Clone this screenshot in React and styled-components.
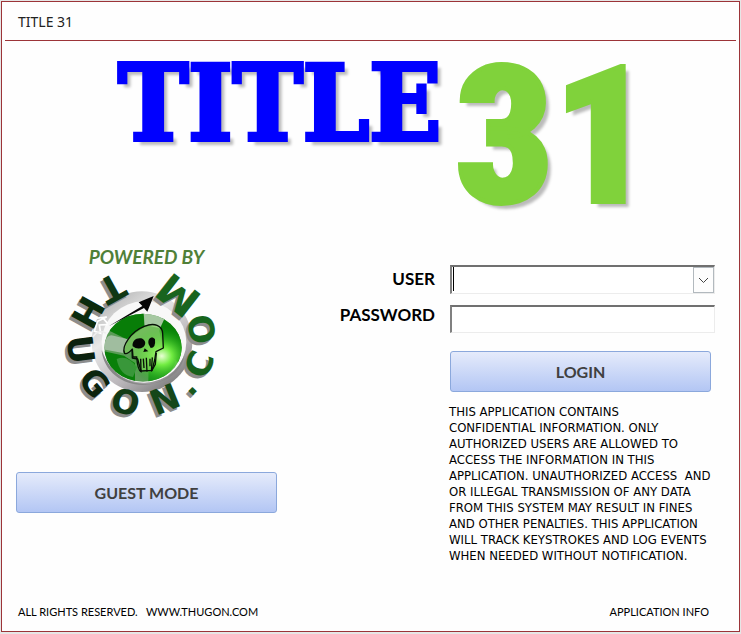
import React from "react";
import styled, { createGlobalStyle } from "styled-components";

const GlobalStyle = createGlobalStyle`
  * { box-sizing: border-box; }
  body {
    margin: 0;
    background: #e6e6e6;
    color: #000;
    font-family: Lato, "Open Sans", sans-serif;
  }
`;

const Frame = styled.div`
  display: flex;
  flex-direction: column;
  min-height: calc(100vh - 3px);
  margin: 1px 1px 2px;
  border: 1px solid #9c3438;
  background: #fefefe;
`;

const TitleBar = styled.header`
  margin: 0 3px;
  padding: 9px 13px 8px;
  border-bottom: 1px solid #9c3438;
  color: #222;
  font: 14px/21px "Noto Sans", sans-serif;
`;

const Brand = styled.h1`
  display: flex;
  align-items: flex-start;
  gap: 14px;
  height: 206px;
  margin: 0;
  padding: 23px 20px 0 116px;
`;

const BrandWord = styled.span`
  color: #0000ff;
  font: bold 105px/78px "DejaVu Serif Condensed", "DejaVu Serif", serif;
  -webkit-text-stroke: 4px #0000ff;
  text-shadow: 5px 5px 3px #bbb;
`;

const BrandNumber = styled.span`
  color: #80d23b;
  font: 900 192px/146px "Roboto Condensed", "Open Sans Condensed", Roboto, sans-serif;
  -webkit-text-stroke: 4px #80d23b;
  text-shadow: 5px 5px 3px #bbb;
`;

const Content = styled.main`
  display: grid;
  grid-template-columns: minmax(262px, 321px) minmax(0, 1fr);
  flex: 1;
  padding: 0 24px 0 14px;
`;

const PoweredColumn = styled.section`
  display: flex;
  flex-direction: column;
  align-items: flex-start;
`;

const Powered = styled.div`
  display: flex;
  flex-direction: column;
  align-items: center;
  width: 261px;
  padding-bottom: 51px;
`;

const PoweredLabel = styled.p`
  margin: 0;
  color: #4f8038;
  font-size: 19px;
  font-weight: bold;
  font-style: italic;
  line-height: 20px;
`;

const Emblem = styled.svg`
  width: 148px;
  height: 154px;
  margin-right: 10px;
  overflow: visible;
`;

const ActionButton = styled.button`
  width: 261px;
  height: 41px;
  padding: 0;
  border: 1px solid #8ba8dc;
  border-radius: 3px;
  background: linear-gradient(#e5ebfb, #b3c6f4);
  color: #404040;
  font: bold 16px/20px Lato, sans-serif;
`;

const LoginForm = styled.form`
  display: grid;
  grid-template-columns: 1fr 265px;
  column-gap: 15px;
  align-content: start;
  padding-top: 18px;
`;

const FieldLabel = styled.label`
  padding-top: ${({ $tall }) => ($tall ? "4px" : "0")};
  font-size: 17px;
  font-weight: bold;
  line-height: 20px;
  text-align: right;
`;

const fieldLook = `
  display: block;
  width: 100%;
  padding: 0 8px;
  border: 1px solid #ececec;
  border-top: 2px solid #707070;
  border-left: 2px solid #808080;
  border-radius: 0;
  outline: none;
  background: #fff;
  font: 16px/20px Lato, sans-serif;
`;

const ComboBox = styled.div`
  position: relative;
  height: 40px;
`;

const UserSelect = styled.select`
  ${fieldLook}
  height: 29px;
  appearance: none;
`;

const Caret = styled.span`
  position: absolute;
  top: 2px;
  left: 3px;
  width: 1px;
  height: 24px;
  background: #000;
  pointer-events: none;
`;

const ComboArrow = styled.span`
  position: absolute;
  top: 2px;
  right: 1px;
  display: grid;
  place-items: center;
  width: 21px;
  height: 26px;
  border: 1px solid #b2b9be;
  background: #fdfdfd;
  pointer-events: none;
`;

const PasswordInput = styled.input`
  ${fieldLook}
  height: 28px;
`;

const FormBody = styled.div`
  grid-column: 2;
  padding-top: 18px;
`;

const Notice = styled.p`
  margin: 12px 0 0 -1px;
  font: 13px/16px "DejaVu Sans Condensed", "DejaVu Sans", sans-serif;
  white-space: pre-wrap;
`;

const Footer = styled.footer`
  display: flex;
  justify-content: space-between;
  padding: 0 30px 11px 16px;
  font-size: 11px;
  line-height: 16px;
  white-space: pre;
`;

const ringLetters = [
  ["T", 151, 108], ["H", 119, 106], ["U", 83, 106], ["G", 49, 100], ["O", 15, 100],
  ["N", -22, 104], [".", -46, 98], ["C", -69, 104], ["O", -102, 104], ["M", -142, 124],
];

const ringColors = ["#103814", "#0b2b0e", "#0b210e", "#0c240e", "#113a15", "#154719", "#17581c", "#17601b", "#17651d", "#19641e"];

function Ring({ shadow }) {
  return ringLetters.map(([letter, angle, size], i) => (
    <text
      key={i}
      transform={`rotate(${angle})`}
      y="222"
      fill={shadow ? "#8d8d8d" : ringColors[i]}
      fontSize={size}
      textAnchor="middle"
    >
      {letter}
    </text>
  ));
}

function ThugonEmblem() {
  return (
    <Emblem viewBox="39 75 444 462" role="img" aria-label="Thugon.com">
      <defs>
        <linearGradient id="rim" x1="0.1" y1="0" x2="0.8" y2="1">
          <stop offset="0" stopColor="#aaa" />
          <stop offset="0.35" stopColor="#e9e9e9" />
          <stop offset="0.7" stopColor="#b9b5b9" />
          <stop offset="1" stopColor="#777" />
        </linearGradient>
        <radialGradient id="glow" cx="0.73" cy="0.62" r="0.42">
          <stop offset="0" stopColor="#eaffd5" />
          <stop offset="0.3" stopColor="#73ed43" />
          <stop offset="1" stopColor="#12a512" stopOpacity="0" />
        </radialGradient>
        <clipPath id="globe"><ellipse cx="264" cy="317" rx="116" ry="102" /></clipPath>
      </defs>
      <circle cx="261" cy="299" r="151" fill="url(#rim)" />
      <ellipse cx="267" cy="300" rx="127" ry="122" fill="#f8f8f8" />
      <path d="M140 325 C150 440 330 480 388 340 C375 440 195 475 140 325" fill="#888" />
      <g clipPath="url(#globe)">
        <rect x="145" y="212" width="240" height="210" fill="#5b9c57" />
        <path d="M160 265 Q210 205 266 213 L268 255 L215 292 Z" fill="#087d08" />
        <path d="M325 220 Q410 280 374 366 L326 325 L313 267 Z" fill="#078007" />
        <path d="M145 327 L207 341 L240 363 L240 422 Q155 396 145 327" fill="#098009" />
        <path d="M281 365 L364 350 Q350 410 280 419 Z" fill="#199119" />
        <path d="M266 212 H337 L315 259 L269 249 Z" fill="#a6c8a2" />
        <path d="M146 322 Q150 272 176 281 L219 292 L204 333 Z" fill="#a0bd9f" />
        <path d="M185 351 Q218 337 246 376 L234 405 Q194 400 185 351" fill="#39973a" />
        <rect x="145" y="212" width="240" height="210" fill="url(#glow)" />
      </g>
      <g fontFamily="DejaVu Sans" fontWeight="bold">
        <g transform="translate(252 309)"><Ring shadow /></g>
        <g transform="translate(260 300)"><Ring /></g>
      </g>
      <path d="M209 334 C198 315 228 268 268 253 C298 241 322 250 323 275 L325 318 L303 329 L299 354 L291 385 L258 387 L248 351 L232 348 L231 322 Q217 338 209 334 Z" fill="#8ade60" fillOpacity="0.5" stroke="#071007" strokeWidth="4" strokeLinejoin="round" />
      <path d="M233 313 C230 297 244 286 259 289 C274 295 273 309 265 315 Q249 325 233 313 M281 307 C276 289 292 280 300 292 Q303 318 287 318 Z M269 319 L280 328 L265 330 Z" fill="#050805" />
      <path d="M232 320 L234 345 L245 345 Q248 384 258 389 L257 350 M265 350 L267 378 M274 347 L276 389 M285 350 L285 373 M292 346 L289 388 L301 367 L304 333" fill="none" stroke="#071007" strokeWidth="4" />
      <path d="M161 253 L262 192 L251 181 L296 162 L277 209 L267 198 Z" fill="#050505" />
      <path d="M115 230 L155 225 L128 238 L118 268 L137 274 L133 249 L158 248 M142 226 L158 244" fill="none" stroke="#fff" strokeWidth="5" />
      <path d="M113 286 Q129 260 153 274" fill="none" stroke="#eee" strokeWidth="5" />
    </Emblem>
  );
}

const notice = `THIS APPLICATION CONTAINS
CONFIDENTIAL INFORMATION. ONLY
AUTHORIZED USERS ARE ALLOWED TO
ACCESS THE INFORMATION IN THIS
APPLICATION. UNAUTHORIZED ACCESS  AND
OR ILLEGAL TRANSMISSION OF ANY DATA
FROM THIS SYSTEM MAY RESULT IN FINES
AND OTHER PENALTIES. THIS APPLICATION
WILL TRACK KEYSTROKES AND LOG EVENTS
WHEN NEEDED WITHOUT NOTIFICATION.`;

export default function App() {
  return (
    <>
      <GlobalStyle />
      <Frame>
        <TitleBar>TITLE 31</TitleBar>
        <Brand>
          <BrandWord>TITLE</BrandWord>
          <BrandNumber>31</BrandNumber>
        </Brand>
        <Content>
          <PoweredColumn>
            <Powered>
              <PoweredLabel>POWERED BY</PoweredLabel>
              <ThugonEmblem />
            </Powered>
            <ActionButton type="button">GUEST MODE</ActionButton>
          </PoweredColumn>
          <LoginForm onSubmit={(event) => event.preventDefault()}>
            <FieldLabel htmlFor="user" $tall>USER</FieldLabel>
            <ComboBox>
              <UserSelect id="user" defaultValue="">
                <option value="" />
              </UserSelect>
              <Caret />
              <ComboArrow>
                <svg width="11" height="7" viewBox="0 0 11 7" aria-hidden="true">
                  <path d="M1 1 L5.5 5.5 L10 1" fill="none" stroke="#444" />
                </svg>
              </ComboArrow>
            </ComboBox>
            <FieldLabel htmlFor="password">PASSWORD</FieldLabel>
            <PasswordInput id="password" type="password" />
            <FormBody>
              <ActionButton type="submit">LOGIN</ActionButton>
              <Notice>{notice}</Notice>
            </FormBody>
          </LoginForm>
        </Content>
        <Footer>
          <span>ALL RIGHTS RESERVED.   WWW.THUGON.COM</span>
          <span>APPLICATION INFO</span>
        </Footer>
      </Frame>
    </>
  );
}
